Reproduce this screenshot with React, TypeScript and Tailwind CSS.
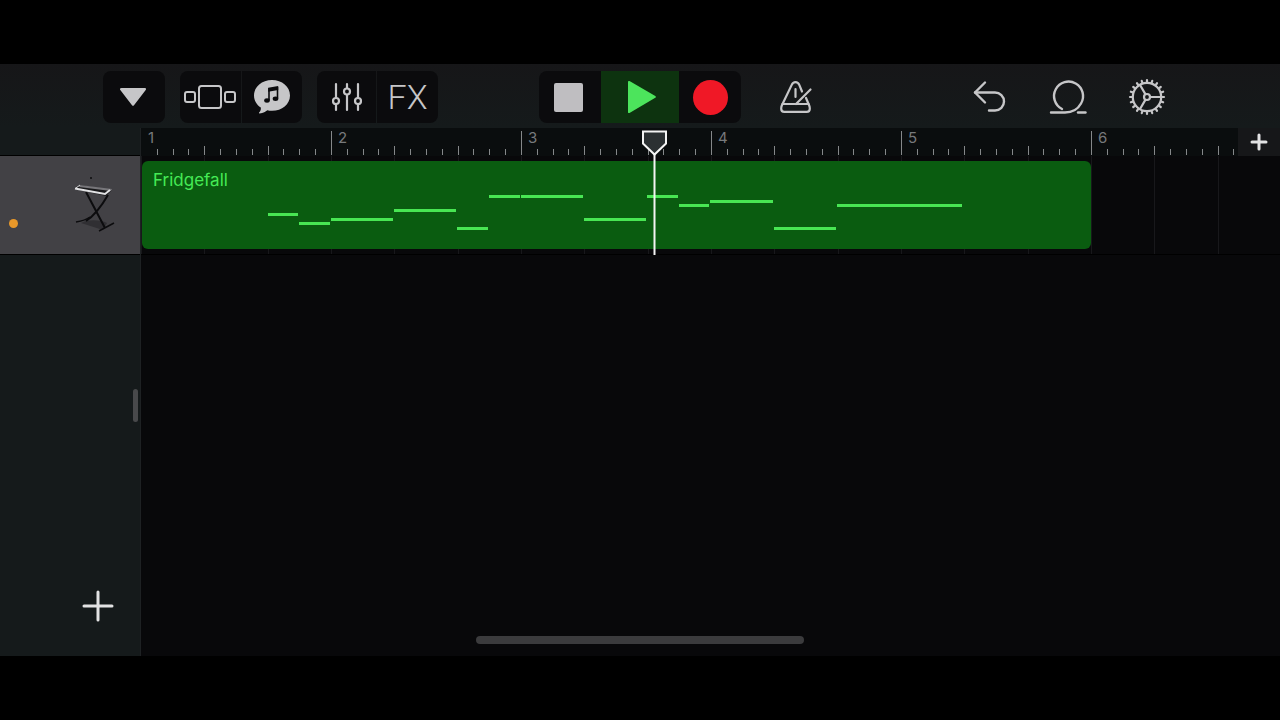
import type { ReactNode } from "react";

type Note = { start: number; length: number; row: number };

// 30 steps span the region, rows run from the highest pitch down
const notes: Note[] = [
  { start: 5, length: 1, row: 5 },
  { start: 6, length: 1, row: 7 },
  { start: 7, length: 2, row: 6 },
  { start: 9, length: 2, row: 4 },
  { start: 11, length: 1, row: 8 },
  { start: 12, length: 1, row: 1 },
  { start: 13, length: 2, row: 1 },
  { start: 15, length: 2, row: 6 },
  { start: 17, length: 1, row: 1 },
  { start: 18, length: 1, row: 3 },
  { start: 19, length: 2, row: 2 },
  { start: 21, length: 2, row: 8 },
  { start: 23, length: 4, row: 3 },
];

const bars = [1, 2, 3, 4, 5, 6];
const ticks = Array.from({ length: 12 }, (_, i) => i);
const teeth = Array.from({ length: 20 }, (_, i) => i * 18);

const ToolButton = ({
  label,
  className = "",
  children,
}: {
  label: string;
  className?: string;
  children: ReactNode;
}) => (
  <button
    type="button"
    aria-label={label}
    className={`flex h-[52px] items-center justify-center text-[#c6c6c8] ${className}`}
  >
    {children}
  </button>
);

const BrowserIcon = () => (
  <svg width="54" height="26" viewBox="0 0 54 26" fill="none" stroke="currentColor" strokeWidth="2">
    <rect x="1" y="8" width="10" height="10" rx="2" />
    <rect x="15" y="2" width="22" height="22" rx="2.5" />
    <rect x="41" y="8" width="10" height="10" rx="2" />
  </svg>
);

const LoopsIcon = () => (
  <svg width="36" height="34" viewBox="0 0 36 34">
    <path
      fill="currentColor"
      d="M18 0C8 0 0 6.8 0 15.4c0 4.900 2.600 9.200 6.800 12 .3 2-.3 3.700-1.700 5.200-.4.500 0 .9.600.8 3.500-.5 6-1.700 7.600-3.200 1.500.4 3.100.6 4.700.6 10 0 18-6.800 18-15.400S28 0 18 0z"
    />
    <path fill="#0b0b0d" d="M14.2 7.700l10-1.800v4l-10 1.800z" />
    <path fill="none" stroke="#0b0b0d" strokeWidth="1.6" d="M15 8v12.500M23.500 7v11.500" />
    <ellipse cx="13" cy="20.5" rx="2.8" ry="2.2" fill="#0b0b0d" />
    <ellipse cx="21.5" cy="18.7" rx="2.8" ry="2.2" fill="#0b0b0d" />
  </svg>
);

const MixerIcon = () => (
  <svg width="30" height="30" viewBox="0 0 30 30" fill="none" stroke="currentColor" strokeWidth="2.2" strokeLinecap="round">
    <path d="M4 2v13.500M4 22.500V28M15 2v4M15 13v15M26 2v13.500M26 22.500V28" />
    <circle cx="4" cy="19" r="3" />
    <circle cx="15" cy="9.5" r="3" />
    <circle cx="26" cy="19" r="3" />
  </svg>
);

const MetronomeIcon = () => (
  <svg width="34" height="34" viewBox="0 0 34 34" fill="none" stroke="currentColor" strokeWidth="2.2" strokeLinecap="round" strokeLinejoin="round">
    <path d="M23 11.500l-2.600-6.400C19.400 2.900 18.400 2.200 16.500 2.200s-2.900.7-3.900 2.900L2.800 25.500c-.5 1.200-.6 2-.6 3.200 0 2 1.200 3.100 3.100 3.100h22.400c1.900 0 3.100-1.100 3.100-3.100 0-1.200-.1-2-.6-3.200L27 18" />
    <path d="M3.500 24h26M16.500 9v8M17 24L31.500 9.500" />
  </svg>
);

const UndoIcon = () => (
  <svg width="34" height="34" viewBox="0 0 34 34" fill="none" stroke="currentColor" strokeWidth="2.4" strokeLinecap="round" strokeLinejoin="round">
    <path d="M13 2.500L3 12.500l10 10" />
    <path d="M3 12.500h20a9 9 0 0 1 0 18h-6" />
  </svg>
);

const LoopIcon = () => (
  <svg width="38" height="36" viewBox="0 0 38 36" fill="none" stroke="currentColor" strokeWidth="2.4" strokeLinecap="round">
    <path d="M13 30A14.500 14.500 0 1 1 32 24.500C29 30 23.500 33.500 16 33.500H2" />
    <path d="M29 33.500h7.500" />
  </svg>
);

const GearIcon = () => (
  <svg width="38" height="38" viewBox="-19 -19 38 38" fill="none" stroke="currentColor" strokeWidth="2.2">
    <circle r="14.2" />
    <circle r="3" />
    <path d="M3 0h11M-1.500-2.600L-7.100-12.300M-1.500 2.600L-7.100 12.300" />
    {teeth.map((angle) => (
      <path key={angle} d="M15 0h2" strokeLinecap="round" transform={`rotate(${angle})`} />
    ))}
  </svg>
);

const KeyboardIcon = () => (
  <svg width="44" height="60" viewBox="0 0 44 60" fill="none">
    <path d="M8 48c7-4 20-3 26 0l-4 7z" fill="#302f33" />
    <path d="M13 17l19 36M35 20C28 32 21 41 13 46" stroke="#0c0c0e" strokeWidth="2" />
    <path d="M3 47c6-1 10-2 14-5M26 56l15-8" stroke="#0c0c0e" strokeWidth="1.5" />
    <path d="M7 10l32 5-6 6L2 14z" fill="#19191b" />
    <path d="M7 10l32 4-1 2-32-4z" fill="#77767a" />
    <path d="M2 13.500l30 5.500 5-4" stroke="#e2e2e4" strokeWidth="2" />
    <path d="M3 13l4-3" stroke="#dcdcde" />
    <circle cx="18" cy="3" r="1" fill="#0c0c0e" />
  </svg>
);

const PlusIcon = ({ size, stroke }: { size: number; stroke: number }) => (
  <svg width={size} height={size} viewBox={`0 0 ${size} ${size}`} stroke="#e2e2e3" strokeWidth={stroke} strokeLinecap="round">
    <path d={`M${size / 2} 2V${size - 2}M2 ${size / 2}H${size - 2}`} />
  </svg>
);

const Toolbar = () => (
  <header className="grid h-16 grid-cols-[1fr_auto_1fr] items-center bg-linear-to-b from-[#161618] to-[#151a1b] pt-[2px]">
    <div className="flex gap-[15px] pl-[103px]">
      <ToolButton label="Tracks menu" className="w-[62px] rounded-lg bg-[#0b0b0d]">
        <svg width="28" height="20" viewBox="0 0 28 20" fill="currentColor">
          <path d="M1.500 1h23c1.500 0 2 1 1.200 2L14 18.200c-.6.8-1.400.8-2 0L.3 3C-.5 2 0 1 1.500 1z" />
        </svg>
      </ToolButton>
      <div className="flex gap-px">
        <ToolButton label="Sound browser" className="w-[61px] rounded-l-lg bg-[#0b0b0d]">
          <BrowserIcon />
        </ToolButton>
        <ToolButton label="Loop browser" className="w-[60px] rounded-r-lg bg-[#0b0b0d]">
          <LoopsIcon />
        </ToolButton>
      </div>
      <div className="flex gap-px">
        <ToolButton label="Track controls" className="w-[59px] rounded-l-lg bg-[#0b0b0d]">
          <MixerIcon />
        </ToolButton>
        <ToolButton label="Effects" className="w-[61px] rounded-r-lg bg-[#0b0b0d]">
          <span className="font-[Roboto,sans-serif] text-[34px] font-light">FX</span>
        </ToolButton>
      </div>
    </div>

    <div className="flex">
      <ToolButton label="Stop" className="w-[62px] rounded-l-lg bg-[#0b0b0d] pr-[3px]">
        <span className="size-[29px] rounded-xs bg-[#bfbec1]" />
      </ToolButton>
      <ToolButton label="Play" className="w-[78px] bg-[#0d330f] pl-[3px]">
        <svg width="30" height="34" viewBox="0 0 30 34" fill="#4ce45c">
          <path d="M1 1.800c0-.8.700-1.200 1.500-.7L28.300 16c.8.500.8 1.300 0 1.800L2.500 32.900c-.8.500-1.500.1-1.500-.7z" />
        </svg>
      </ToolButton>
      <ToolButton label="Record" className="w-[62px] rounded-r-lg bg-[#0b0b0d]">
        <span className="size-[35px] rounded-full bg-[#f01826]" />
      </ToolButton>
    </div>

    <div className="flex justify-between pl-6 pr-[102px]">
      <ToolButton label="Metronome" className="w-[62px]">
        <MetronomeIcon />
      </ToolButton>
      <div className="flex gap-[17px]">
        <ToolButton label="Undo" className="w-[62px]">
          <UndoIcon />
        </ToolButton>
        <ToolButton label="Loop section" className="w-[62px]">
          <LoopIcon />
        </ToolButton>
        <ToolButton label="Settings" className="w-[62px]">
          <GearIcon />
        </ToolButton>
      </div>
    </div>
  </header>
);

const tickHeight = (tick: number) => {
  if (tick === 0) return "h-6";
  return tick % 4 === 0 ? "h-[9px]" : "h-[6px]";
};

const Ruler = () => (
  <div className="flex h-7 bg-[#0a0d0e]">
    <div className="flex min-w-0 flex-1 overflow-hidden">
      {bars.map((bar) => (
        <div key={bar} className="relative grid w-[190px] shrink-0 grid-cols-12 items-end pb-px">
          {ticks.map((tick) => (
            <span
              key={tick}
              className={`w-px ${tickHeight(tick)} ${bar === 1 && tick === 0 ? "bg-transparent" : "bg-[#85888a]"}`}
            />
          ))}
          <span className="absolute left-[7px] top-px text-[15px] leading-[18px] text-[#77797c]">
            {bar}
          </span>
        </div>
      ))}
    </div>
    <button type="button" aria-label="Add section" className="flex w-[42px] items-center justify-center bg-[#161719]">
      <PlusIcon size={18} stroke={3} />
    </button>
  </div>
);

const Lane = () => (
  <div className="relative h-[99px] overflow-hidden border-b border-black bg-[#08080a] pl-px pt-[5px]">
    <div className="absolute inset-0 flex">
      {bars.map((bar) => (
        <div key={bar} className="grid w-[190px] shrink-0 grid-cols-3">
          <span className="border-l border-[#18181b]" />
          <span className="border-l border-[#18181b]" />
          <span className="border-l border-[#18181b]" />
        </div>
      ))}
    </div>
    <section className="relative h-[88px] w-[949px] rounded-md bg-[#0a5c10]">
      <h2 className="pl-[11px] pt-[9px] text-[17px] leading-5 text-[#45ea55]">Fridgefall</h2>
      <div className="absolute inset-x-0 top-[34px] grid h-9 grid-cols-[repeat(30,1fr)] grid-rows-8">
        {notes.map((note) => (
          <span
            key={note.start}
            className="-ml-px mr-[2px] h-[3px] bg-[#48e653]"
            style={{ gridColumn: `${note.start} / span ${note.length}`, gridRow: note.row }}
          />
        ))}
      </div>
    </section>
  </div>
);

const Playhead = () => (
  <svg className="absolute left-[501px] top-[2px]" width="25" height="125" viewBox="0 0 25 125" fill="none" stroke="#f4f4f4">
    <path d="M12.500 24v101" strokeWidth="2" />
    <path d="M1 1.500h23v12L12.500 24.500 1 13.500z" fill="#2b3032" strokeWidth="2" />
  </svg>
);

const App = () => (
  <div className="flex min-h-screen flex-col bg-black py-16 font-[Inter,sans-serif]">
    <main className="relative flex flex-1 flex-col">
      <Toolbar />
      <div className="flex flex-1">
        <aside className="flex w-[141px] shrink-0 flex-col border-r border-[#1e2123] bg-[#151a1b]">
          <div className="h-7 border-b border-black" />
          <div className="flex h-[99px] items-center justify-between border-b border-black bg-[#424145] pl-[9px] pr-[23px]">
            <span className="mt-9 size-[9px] rounded-full bg-[#e8982a]" />
            <KeyboardIcon />
          </div>
          <div className="flex flex-1 flex-col">
            <div className="mr-[2px] mt-[134px] h-[33px] w-[5px] self-end rounded-sm bg-[#48494b]" />
            <button type="button" aria-label="Add track" className="mb-[34px] mr-[26px] mt-auto self-end">
              <PlusIcon size={32} stroke={3} />
            </button>
          </div>
        </aside>
        <div className="relative flex min-w-0 flex-1 flex-col bg-[#08080a]">
          <Ruler />
          <Lane />
          <Playhead />
        </div>
      </div>
      <div className="absolute bottom-3 left-1/2 h-2 w-[328px] -translate-x-1/2 rounded-full bg-[#3b3b3d]" />
    </main>
  </div>
);

export default App;
